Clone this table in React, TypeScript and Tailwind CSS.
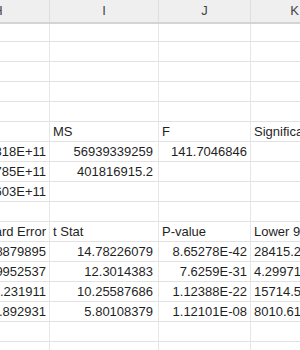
import React from "react";

type Cell = { t?: string; a?: "l" | "r" };

const widths = ["w-[103px]", "w-[109px]", "w-[92px]", "w-[88px]"];
const padR = ["pr-[3px]", "pr-[5px]", "pr-[3px]", "pr-[3px]"];

const rows: Cell[][] = [
  [{}, {}, {}, {}],
  [{}, {}, {}, {}],
  [{}, {}, {}, {}],
  [{}, {}, {}, {}],
  [{}, {}, {}, {}],
  [{}, { t: "MS", a: "l" }, { t: "F", a: "l" }, { t: "Significance F", a: "l" }],
  [{ t: "1.1387867818E+11", a: "r" }, { t: "56939339259", a: "r" }, { t: "141.7046846", a: "r" }, {}],
  [{ t: "4.5735645785E+11", a: "r" }, { t: "401816915.2", a: "r" }, {}, {}],
  [{ t: "5.7123513603E+11", a: "r" }, {}, {}, {}],
  [{}, {}, {}, {}],
  [{ t: "Standard Error", a: "r" }, { t: "t Stat", a: "l" }, { t: "P-value", a: "l" }, { t: "Lower 95%", a: "l" }],
  [{ t: "1922.978879895", a: "r" }, { t: "14.78226079", a: "r" }, { t: "8.65278E-42", a: "r" }, { t: "28415.21", a: "l" }],
  [{ t: "0.349952537", a: "r" }, { t: "12.3014383", a: "r" }, { t: "7.6259E-31", a: "r" }, { t: "4.299712", a: "l" }],
  [{ t: "1789.231911", a: "r" }, { t: "10.25587686", a: "r" }, { t: "1.12388E-22", a: "r" }, { t: "15714.52", a: "l" }],
  [{ t: "1813.892931", a: "r" }, { t: "5.80108379", a: "r" }, { t: "1.12101E-08", a: "r" }, { t: "8010.612", a: "l" }],
  [{}, {}, {}, {}],
  [{}, {}, {}, {}],
];

export default function App() {
  return (
    <div
      className="w-[300px] h-[350px] overflow-hidden bg-white text-[13px] text-[#1f1f1f]"
      style={{ fontFamily: '"Liberation Sans", Arial, sans-serif' }}
    >
      <div className="ml-[-53px] w-[420px] flex flex-col">
        <div className="flex h-[24px] bg-[#efefef] border-b-2 border-[#d4d4d4]">
          {["H", "I", "J", "K"].map((l, i) => (
            <div
              key={l}
              className={`${widths[i]} shrink-0 flex items-center justify-center border-r border-[#dedede] text-[#444] text-[13px]`}
            >
              {l}
            </div>
          ))}
        </div>
        {rows.map((r, ri) => (
          <div
            key={ri}
            className={`flex ${ri === 0 ? "h-[18px]" : "h-[20px]"} border-b border-[#e1e1e1]`}
          >
            {r.map((c, ci) => (
              <div
                key={ci}
                className={`${widths[ci]} shrink-0 overflow-hidden whitespace-nowrap flex items-center border-r border-[#e6e6e6] ${
                  c.a === "r" ? `justify-end ${padR[ci]}` : "justify-start pl-[3px]"
                }`}
              >
                {c.t}
              </div>
            ))}
          </div>
        ))}
      </div>
    </div>
  );
}
